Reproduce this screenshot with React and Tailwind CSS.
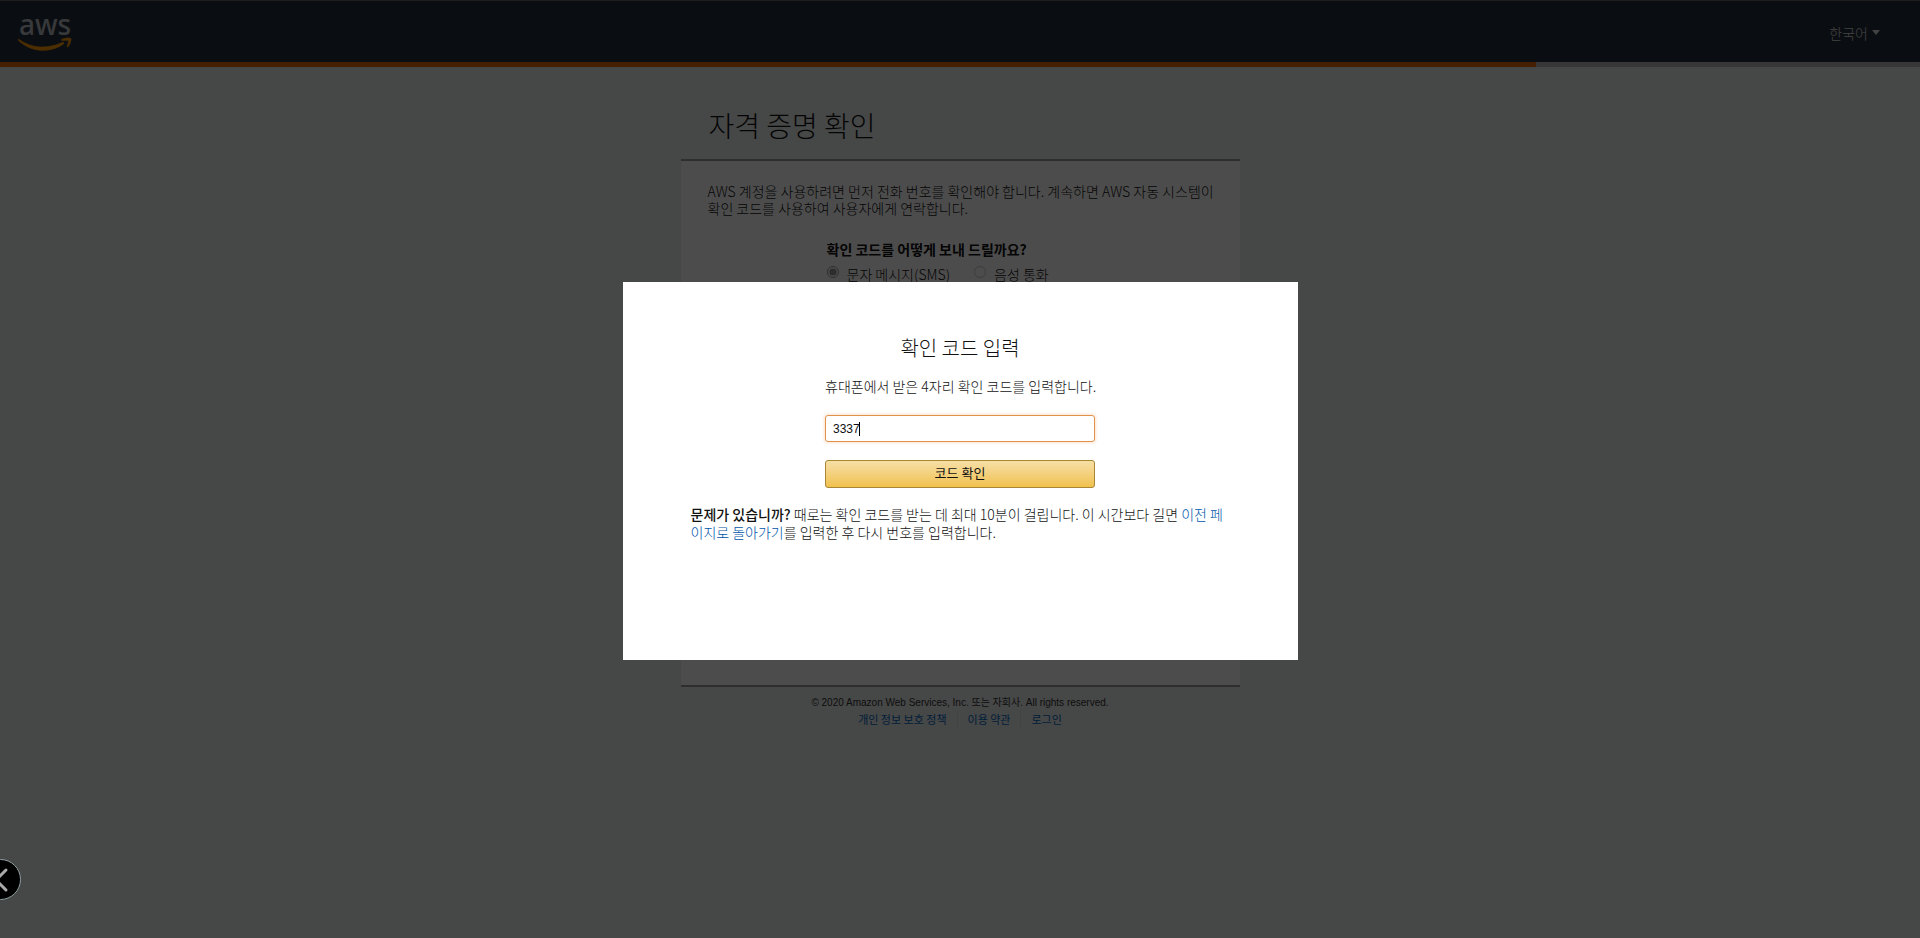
import React from "react";

function AwsLogo() {
  return (
    <a href="#home" aria-label="AWS" className="flex flex-col items-center pb-1">
      <span className="font-['Noto_Sans',sans-serif] text-[28px] leading-[26px] font-medium text-white/70">aws</span>
      <svg width="54" height="14" viewBox="0 0 54 14" fill="#f90" stroke="#f90" strokeWidth="0.7" aria-hidden="true">
        <path d="M0.6 2.2C8 7.500 16 10 24 10c7.500 0 14.500-1.800 20.500-4.600 1.200-.5 2 .7 1 1.500C39.500 11.200 32 13.300 25 13.300 15.500 13.300 6.800 9.500.300 3.200-.2 2.600.1 1.900.6 2.200z" />
        <path d="M43.600 2.600c2.400-1.700 8.600-2 9.200-1.100.6 1-.6 6.200-3 8.400-.5.4-.9.1-.7-.4.8-2 1.700-4.900 1.200-5.700-.6-.8-4-.5-6.200-.3-.6 0-.8-.5-.5-.9z" />
      </svg>
    </a>
  );
}

export default function App() {
  return (
    <div className="min-h-screen bg-[#eaeded] font-['Noto_Sans_CJK_KR','Liberation_Sans',sans-serif] text-sm leading-[17px] text-[#111]">
      <header className="flex h-[62px] items-center justify-between border-t border-[#666] bg-[#232f3e] pt-0.5 pr-10 pl-[18px]">
        <AwsLogo />
        <button type="button" className="flex items-center gap-1 text-sm font-light text-[#ddd]">
          한국어
          <svg width="8" height="5" viewBox="0 0 8 5" fill="currentColor" aria-hidden="true">
            <path d="M0 0h8L4 5z" />
          </svg>
        </button>
      </header>
      <div className="h-[5px] bg-[#b8babd]">
        <div className="h-full w-4/5 bg-[#ec6608]" />
      </div>

      <main className="mx-auto w-full max-w-[559px]">
        <h1 className="px-7 pt-12 pb-6 text-[28px] leading-5 font-light">자격 증명 확인</h1>
        <section className="h-[528px] border-t-2 border-b-2 border-t-[#999] border-b-[#999] bg-white">
          <p className="pt-[22px] pr-5 pl-[27px] font-light">
            AWS 계정을 사용하려면 먼저 전화 번호를 확인해야 합니다. 계속하면 AWS 자동 시스템이 확인 코드를 사용하여 사용자에게 연락합니다.
          </p>
          <fieldset className="mt-6 pl-[146px]">
            <legend className="font-bold">확인 코드를 어떻게 보내 드릴까요?</legend>
            <div className="mt-2 flex gap-6 font-light">
              <label className="flex items-start gap-2">
                <input type="radio" name="method" defaultChecked className="size-3 opacity-60 accent-[#555]" />
                문자 메시지(SMS)
              </label>
              <label className="flex items-start gap-2">
                <input type="radio" name="method" className="size-3 opacity-40" />
                음성 통화
              </label>
            </div>
          </fieldset>
        </section>
      </main>

      <footer className="pt-2 text-center">
        <p className="font-['Liberation_Sans','Noto_Sans_CJK_KR',sans-serif] text-[10px] leading-4 text-[#333]">
          © 2020 Amazon Web Services, Inc. 또는 자회사. All rights reserved.
        </p>
        <nav className="flex justify-center text-[11px] leading-4 text-[#0066c0]">
          <a href="#privacy" className="border-r border-[#ddd] px-2.5">개인 정보 보호 정책</a>
          <a href="#terms" className="border-r border-[#ddd] px-2.5">이용 약관</a>
          <a href="#login" className="px-2.5">로그인</a>
        </nav>
      </footer>

      <div className="fixed inset-0 flex items-center justify-center bg-black/70 pt-1">
        <div role="dialog" aria-modal="true" aria-labelledby="code-title" className="w-full max-w-[675px] bg-white px-[68px] pt-14 pb-[119px] text-[#111]">
          <form className="mx-auto flex max-w-[270px] flex-col" onSubmit={(e) => e.preventDefault()}>
            <h2 id="code-title" className="text-center text-xl leading-5 font-light">확인 코드 입력</h2>
            <label htmlFor="code" className="mt-5 text-center font-light whitespace-nowrap">휴대폰에서 받은 4자리 확인 코드를 입력합니다.</label>
            <div className="relative mt-5">
              <input
                id="code"
                type="text"
                defaultValue="3337"
                autoFocus
                className="block h-[27px] w-full rounded-[3px] border border-[#e0914a] px-[7px] font-['Liberation_Sans',sans-serif] text-xs text-[#111] caret-transparent shadow-[0_0_3px_1px_rgba(228,121,17,0.2)] outline-none"
              />
              <span aria-hidden="true" className="absolute top-[7px] left-[34px] h-[14px] w-px bg-black" />
            </div>
            <button type="submit" className="mt-[18px] h-7 rounded-[3px] border border-[#a88734] bg-linear-to-b from-[#f7dfa5] to-[#f0c14b] pb-0.5 text-[13px] leading-5 text-[#111]">
              코드 확인
            </button>
          </form>
          <p className="mt-[17px] leading-[18px] font-light">
            <strong className="font-medium">문제가 있습니까?</strong> 때로는 확인 코드를 받는 데 최대 10분이 걸립니다. 이 시간보다 길면{" "}
            <a href="#previous" className="text-[#0055aa]">이전 페이지로 돌아가기</a>를 입력한 후 다시 번호를 입력합니다.
          </p>
        </div>
      </div>

      <button type="button" aria-label="이전" className="fixed bottom-[38px] -left-5 flex size-[41px] items-center justify-center rounded-full border border-[#8fa0a0] bg-black text-[#aaa]">
        <svg width="16" height="26" viewBox="0 0 16 26" fill="none" stroke="currentColor" strokeWidth="3" strokeLinecap="round" aria-hidden="true">
          <path d="M13 3L3 13l10 10" />
        </svg>
      </button>
    </div>
  );
}
